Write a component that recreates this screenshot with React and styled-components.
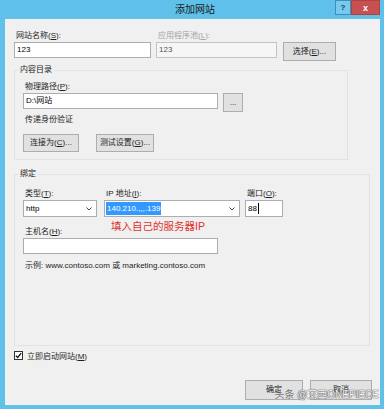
import React from "react";
import styled, { createGlobalStyle } from "styled-components";

const GlobalStyle = createGlobalStyle`
  html, body {
    margin: 0;
    padding: 0;
    background: #5fc1ea;
  }
  body {
    font-family: "Liberation Sans", "Noto Sans CJK SC", sans-serif;
  }
`;

const Window = styled.div`
  width: 384px;
  height: 409px;
  box-sizing: border-box;
  background: #5fc1ea;
  display: flex;
  flex-direction: column;
  padding: 0 4px 4px 5px;
`;

const TitleBar = styled.div`
  height: 19px;
  display: flex;
  align-items: flex-start;
  flex-shrink: 0;
`;

const Title = styled.div`
  flex: 1;
  padding-left: 50px;
  text-align: center;
  font-size: 10px;
  line-height: 19px;
  color: #1a1a1a;
`;

const CaptionButton = styled.div`
  width: ${(p) => p.$width}px;
  height: 15px;
  box-sizing: border-box;
  display: flex;
  align-items: center;
  justify-content: center;
  font-size: ${(p) => (p.$close ? 9 : 8)}px;
  font-weight: bold;
  color: ${(p) => (p.$close ? "#ffffff" : "#1b3d5c")};
  background: ${(p) => (p.$close ? "#c75050" : "#74cbef")};
  border: 1px solid ${(p) => (p.$close ? "#b04242" : "#3d8ebd")};
`;

const Client = styled.div`
  flex: 1;
  position: relative;
  background: #f0f0f0;
  padding: 10px 8px 3px 9px;
  display: flex;
  flex-direction: column;
`;

const Row = styled.div`
  display: flex;
  align-items: flex-start;
  gap: ${(p) => p.$gap || 0}px;
  margin-top: ${(p) => p.$top || 0}px;
`;

const Field = styled.div`
  display: flex;
  flex-direction: column;
  margin-left: ${(p) => p.$left || 0}px;
`;

const Label = styled.div`
  height: 13px;
  line-height: 13px;
  font-size: 8px;
  padding-left: 2px;
  white-space: nowrap;
  color: ${(p) => (p.$disabled ? "#a3a3a3" : "#1e1e1e")};
  margin-top: ${(p) => p.$top || 0}px;
`;

const Key = styled.span`
  text-decoration: underline;
`;

const TextBox = styled.div`
  width: ${(p) => p.$width}px;
  height: ${(p) => p.$height || 16}px;
  box-sizing: border-box;
  border: 1px solid ${(p) => (p.$disabled ? "#c4c4c4" : "#abadb3")};
  background: ${(p) => (p.$disabled ? "#f6f6f6" : "#ffffff")};
  color: ${(p) => (p.$disabled ? "#555555" : "#000000")};
  font-size: 8px;
  line-height: 14px;
  padding: 0 2px;
  display: flex;
  align-items: center;
  white-space: nowrap;
`;

const Select = styled(TextBox)`
  justify-content: space-between;
  padding: 0 4px 0 1px;
`;

const Highlight = styled.span`
  background: #3399ff;
  color: #ffffff;
  line-height: 13px;
  padding: 0 1px;
`;

const Caret = styled.span`
  display: inline-block;
  width: 1px;
  height: 11px;
  background: #000000;
  margin-left: 1px;
`;

const Button = styled.button`
  width: ${(p) => p.$width}px;
  height: ${(p) => p.$height || 18}px;
  margin-top: ${(p) => p.$top || 0}px;
  margin-left: ${(p) => p.$left || 0}px;
  box-sizing: border-box;
  padding: 0;
  background: #e1e1e1;
  border: 1px solid #adadad;
  color: #1e1e1e;
  font-family: inherit;
  font-size: 8px;
  line-height: 1;
`;

const Group = styled.fieldset`
  width: ${(p) => p.$width}px;
  box-sizing: border-box;
  margin: ${(p) => p.$top}px 0 0 0;
  padding: ${(p) => p.$pad};
  border: 1px solid #e2e2e2;
  min-width: 0;
`;

const Legend = styled.legend`
  font-size: 8px;
  line-height: 12px;
  padding: 0 2px;
  margin-left: -5px;
  color: #1e1e1e;
`;

const HostHeader = styled.div`
  display: grid;
  grid-template-columns: 88px auto;
  margin-top: 8px;
  height: 13px;
`;

const Note = styled.div`
  color: #e0302c;
  font-size: 10.5px;
  line-height: 13px;
  margin-top: -5px;
  white-space: nowrap;
`;

const Hint = styled.div`
  font-size: 8px;
  line-height: 13px;
  padding-left: 2px;
  margin-top: 5px;
  color: #1e1e1e;
  white-space: nowrap;
`;

const CheckRow = styled.div`
  display: flex;
  align-items: center;
  gap: 4px;
  height: 13px;
  margin-top: 3px;
  font-size: 8px;
  color: #1e1e1e;
`;

const CheckBox = styled.div`
  width: 9px;
  height: 9px;
  box-sizing: border-box;
  border: 1px solid #333333;
  background: #ffffff;
  display: flex;
  align-items: center;
  justify-content: center;
`;

const Footer = styled.div`
  display: flex;
  justify-content: flex-end;
  gap: 7px;
  margin-top: 18px;
`;

// watermark stamped over the footer buttons
const Watermark = styled.div`
  position: absolute;
  right: 1px;
  bottom: 4px;
  font-size: 10px;
  line-height: 12px;
  white-space: nowrap;
  color: #7a7a7a;
`;

const Outlined = styled.span`
  color: #f4f4f4;
  text-shadow: 0 0 1px #5a5a5a, 0 0 1px #5a5a5a, 0 0 1px #5a5a5a;
`;

const Chevron = () => (
  <svg width="6" height="4" viewBox="0 0 6 4">
    <path d="M0.5 0.5 L3 3 L5.5 0.5" fill="none" stroke="#444" strokeWidth="1" />
  </svg>
);

const App = () => (
  <Window>
    <GlobalStyle />
    <TitleBar>
      <Title>添加网站</Title>
      <CaptionButton $width={16}>?</CaptionButton>
      <CaptionButton $width={29} $close>x</CaptionButton>
    </TitleBar>
    <Client>
      <Row>
        <Field>
          <Label>网站名称(<Key>S</Key>):</Label>
          <TextBox $width={137}>123</TextBox>
        </Field>
        <Field $left={5}>
          <Label $disabled>应用程序池(<Key>L</Key>):</Label>
          <TextBox $width={121} $disabled>123</TextBox>
        </Field>
        <Button $width={53} $height={19} $top={13} $left={6}>
          选择(<Key>E</Key>)...
        </Button>
      </Row>

      <Group $width={334} $top={3} $pad="4px 8px 7px 8px">
        <Legend>内容目录</Legend>
        <Label>物理路径(<Key>P</Key>):</Label>
        <Row $gap={5}>
          <TextBox $width={195}>D:\网站</TextBox>
          <Button $width={20} $height={19}>...</Button>
        </Row>
        <Label $top={1}>传递身份验证</Label>
        <Row $gap={17} $top={8}>
          <Button $width={56}>连接为(<Key>C</Key>)...</Button>
          <Button $width={58}>测试设置(<Key>G</Key>)...</Button>
        </Row>
      </Group>

      <Group $width={356} $top={8} $pad="7px 8px 73px 8px">
        <Legend>绑定</Legend>
        <Row>
          <Field>
            <Label>类型(<Key>T</Key>):</Label>
            <Select $width={74} $height={17}>
              <span style={{ paddingLeft: 1 }}>http</span>
              <Chevron />
            </Select>
          </Field>
          <Field $left={7}>
            <Label>IP 地址(<Key>I</Key>):</Label>
            <Select $width={136} $height={17}>
              <Highlight>140.210.,,,.139</Highlight>
              <Chevron />
            </Select>
          </Field>
          <Field $left={5}>
            <Label>端口(<Key>O</Key>):</Label>
            <TextBox $width={38} $height={17}>
              88<Caret />
            </TextBox>
          </Field>
        </Row>
        <HostHeader>
          <Label>主机名(<Key>H</Key>):</Label>
          <Note>填入自己的服务器IP</Note>
        </HostHeader>
        <TextBox $width={195}></TextBox>
        <Hint>示例: www.contoso.com 或 marketing.contoso.com</Hint>
      </Group>

      <CheckRow>
        <CheckBox>
          <svg width="7" height="7" viewBox="0 0 7 7">
            <path d="M0.8 3.6 L2.7 5.5 L6.2 1.2" fill="none" stroke="#111" strokeWidth="1.3" />
          </svg>
        </CheckBox>
        <span>立即启动网站(<Key>M</Key>)</span>
      </CheckRow>

      <Footer>
        <Button $width={58} $height={20}>确定</Button>
        <Button $width={62} $height={20}>取消</Button>
      </Footer>

      <Watermark>
        头条 <Outlined>@艾西ONEPIECE</Outlined>
      </Watermark>
    </Client>
  </Window>
);

export default App;
